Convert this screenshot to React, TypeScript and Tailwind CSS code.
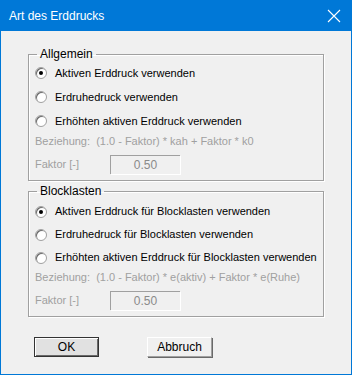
import React from "react";

interface RadioRowProps {
  label: string;
  checked?: boolean;
  rowClass: string;
}

function RadioRow({ label, checked, rowClass }: RadioRowProps) {
  return (
    <div className={`flex items-center pl-[6px] ${rowClass}`}>
      <span className="w-[12px] h-[12px] rounded-full border border-[#a0a0a0] bg-white flex items-center justify-center shadow-[inset_1px_1px_0_#696969]">
        {checked && <span className="w-[4px] h-[4px] rounded-full bg-black" />}
      </span>
      <span className="ml-[8px] text-black whitespace-nowrap">{label}</span>
    </div>
  );
}

interface GroupProps {
  title: string;
  options: string[];
  formula: string;
  rowClass: string;
  topClass: string;
}

function Group({ title, options, formula, rowClass, topClass }: GroupProps) {
  return (
    <fieldset className="mx-[27px] border border-[#a0a0a0] shadow-[inset_1px_1px_0_#fff,1px_1px_0_#fff] px-0 pb-[5px]">
      <legend className="ml-[8px] px-[3px] h-[14px] leading-[14px] text-black text-[12px]">{title}</legend>
      <div className={topClass} />
      {options.map((o, i) => (
        <RadioRow key={o} label={o} checked={i === 0} rowClass={rowClass} />
      ))}
      <div className="h-[16px] leading-[16px] pl-[6px] text-[#a0a0a0] whitespace-pre">{formula}</div>
      <div className="flex items-center h-[21px] mt-[5px] pl-[6px]">
        <span className="w-[75px] text-[#a0a0a0]">Faktor [-]</span>
        <div className="w-[70px] h-[19px] flex items-center justify-center text-[#8a8a8a] text-[12px] border-t border-l border-[#a0a0a0] shadow-[1px_1px_0_#fff]">
          0.50
        </div>
      </div>
    </fieldset>
  );
}

export default function App() {
  return (
    <div
      className="w-[352px] h-[375px] bg-[#f0f0f0] border border-t-0 border-[#0078d7] flex flex-col text-[11px]"
      style={{ fontFamily: '"Liberation Sans", Arial, sans-serif' }}
    >
      <div className="h-[31px] bg-[#0078d7] flex items-center justify-between pl-[9px] pr-[8px] -mx-px">
        <span className="text-white text-[12px]">Art des Erddrucks</span>
        <svg width="14" height="14" viewBox="0 0 14 14" className="mr-[3px]">
          <path d="M1 1 L13 13 M13 1 L1 13" stroke="#fff" strokeWidth="1.1" />
        </svg>
      </div>

      <div className="flex flex-col pt-[16px]">
        <Group
          title="Allgemein"
          rowClass="h-[24px]"
          topClass="h-0"
          options={[
            "Aktiven Erddruck verwenden",
            "Erdruhedruck verwenden",
            "Erhöhten aktiven Erddruck verwenden",
          ]}
          formula="Beziehung:  (1.0 - Faktor) * kah + Faktor * k0"
        />
        <div className="h-[3px]" />
        <Group
          title="Blocklasten"
          rowClass="h-[23px]"
          topClass="h-[2px]"
          options={[
            "Aktiven Erddruck für Blocklasten verwenden",
            "Erdruhedruck für Blocklasten verwenden",
            "Erhöhten aktiven Erddruck für Blocklasten verwenden",
          ]}
          formula="Beziehung:  (1.0 - Faktor) * e(aktiv) + Faktor * e(Ruhe)"
        />
        <div className="flex mt-[20px] pl-[33px] gap-[48px]">
          <button className="w-[65px] h-[20px] bg-[#e1e1e1] border border-[#333] shadow-[inset_1px_1px_0_#fff,inset_-1px_-1px_0_#696969] text-black text-[12px] leading-none">
            OK
          </button>
          <button className="w-[65px] h-[20px] bg-[#f0f0f0] border border-[#a0a0a0] border-t-white border-l-white shadow-[1px_1px_0_#696969] text-black text-[12px] leading-none">
            Abbruch
          </button>
        </div>
      </div>
    </div>
  );
}
